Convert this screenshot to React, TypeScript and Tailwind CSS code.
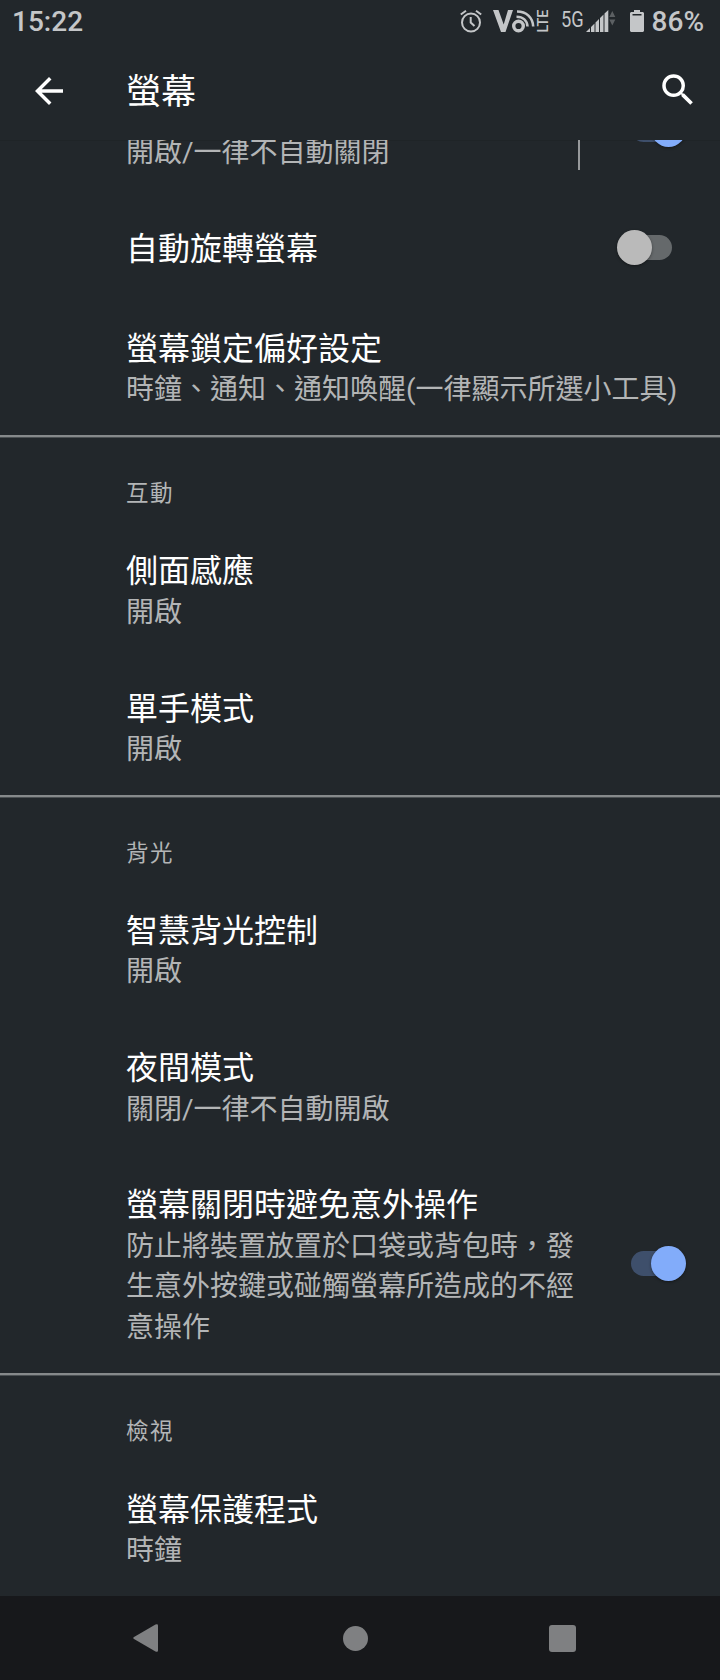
import React from 'react';
import { MdArrowBack, MdSearch } from 'react-icons/md';

interface SwitchProps {
  on: boolean;
}

const Switch: React.FC<SwitchProps> = ({ on }) => (
  <div className="relative flex h-[35px] w-[69px] shrink-0 items-center justify-center">
    <div className={`h-[25px] w-[41px] rounded-full ${on ? 'bg-[#3e4f6b]' : 'bg-[#65696b]'}`} />
    <div
      className={`absolute top-0 size-[35px] rounded-full shadow-[0_1px_3px_rgba(0,0,0,0.4)] ${
        on ? 'right-0 bg-[#82acfa]' : 'left-0 bg-[#bababa]'
      }`}
    />
  </div>
);

interface ItemProps {
  title: string;
  summary?: string;
  on?: boolean;
}

const Item: React.FC<ItemProps> = ({ title, summary, on }) => {
  if (!summary) {
    return (
      <div className="flex h-[100px] items-center justify-between pl-[126px] pr-[34px]">
        <h3 className="pt-[3px] text-[32px] leading-[41px] text-white">{title}</h3>
        {on !== undefined && <Switch on={on} />}
      </div>
    );
  }
  return (
    <div className="flex items-center justify-between pl-[126px] pr-[34px]">
      <div className={`pt-[30px] pb-[24.2px] ${on !== undefined ? 'w-[452px]' : 'whitespace-nowrap'}`}>
        <h3 className="text-[32px] leading-[42.2px] text-white">{title}</h3>
        <p className="text-[28px] leading-[40.7px] text-[#b3b5b6]">{summary}</p>
      </div>
      {on !== undefined && <Switch on={on} />}
    </div>
  );
};

interface SectionProps {
  label: string;
  children: React.ReactNode;
}

const Section: React.FC<SectionProps> = ({ label, children }) => (
  <section className="border-t-2 border-[#86898b] shadow-[inset_0_1px_0_#4b5053]">
    <h2 className="h-[83.6px] pl-[126px] pt-[39.9px] text-[22.5px] leading-[32px] tracking-[1.5px] text-[#b3b5b6]">
      {label}
    </h2>
    {children}
  </section>
);

const StatusBar: React.FC = () => (
  <div className="flex h-[44px] shrink-0 items-center justify-between pl-[12px] pr-[16px] text-[28px] font-medium text-[#c4c6c8]">
    <span>15:22</span>
    <div className="flex items-center">
      {/* alarm */}
      <svg className="mr-[10px] -mt-[3px]" width="24" height="24" viewBox="0 0 24 24" fill="none" stroke="#c4c6c8" strokeWidth="2">
        <circle cx="12" cy="13.5" r="9" />
        <path d="M11.7 8v5.5l3.8 3.5M1.8 5.5L7 1.7M22.2 5.5L17 1.7" />
      </svg>
      {/* VoLTE */}
      <svg className="mr-[12px] -mt-[3px]" width="56" height="26" viewBox="0 0 56 26" fill="none">
        <path d="M0 2h5.5l5.2 14.5L15 2h5l-7.5 22H8z" fill="#c4c6c8" />
        <circle cx="25.5" cy="18" r="4.8" stroke="#c4c6c8" strokeWidth="3.4" />
        <path d="M23.5 8.7c6.5 0 10.7 3.8 11 9.8M24 3.5c9.5 0 15.7 6 16.2 15" stroke="#c4c6c8" strokeWidth="2.6" />
        <text
          transform="translate(54.5 24.5) rotate(-90)"
          textLength="23"
          lengthAdjust="spacingAndGlyphs"
          fontSize="14.5"
          fontWeight="500"
          fill="#c4c6c8"
        >
          LTE
        </text>
      </svg>
      <span className="-mt-[3px] mr-[4px] w-[21px] origin-left scale-x-[0.85] text-[21.5px] font-normal">5G</span>
      <svg className="mr-[14px] -mt-[3px]" width="30" height="24" viewBox="0 0 30 24" fill="#c4c6c8">
        <path d="M0 23l4-4v4zM5 18l3.5-3.5V23H5zM9.5 13.5l3.500-3.500V23H9.500zM14 9l3.5-3.5V23H14zM18.5 4.5L22.3 1v22h-3.8z" />
        <path d="M23.3 8l3-6 3 6zM23.3 10.5l3 6 3-6z" fill="#5c6063" />
      </svg>
      <svg className="mr-[8px] -mt-[3px]" width="14" height="24" viewBox="0 0 14 24" fill="#c4c6c8">
        <path d="M4 1h6v2h3l1 1v18l-1 1H1l-1-1V4l1-1h3z" />
        <path d="M2.5 5h9v1.500h-9z" fill="#22272b" />
      </svg>
      <span>86%</span>
    </div>
  </div>
);

const NavBar: React.FC = () => (
  <nav className="flex h-[84px] shrink-0 items-center justify-between bg-[#17181b] pl-[133px] pr-[144px]">
    <svg width="25" height="28" viewBox="0 0 25 28" fill="#7f8082">
      <path d="M1 13L22.5.5Q25-.5 25 1.5v25Q25 28.5 22.5 27.5L1 15Q-.5 14 1 13z" />
    </svg>
    <div className="ml-[4px] size-[25px] rounded-full bg-[#7f8082]" />
    <div className="size-[27px] rounded-[3px] bg-[#7f8082]" />
  </nav>
);

const App: React.FC = () => {
  return (
    <div
      lang="zh-Hant"
      className="flex h-[1680px] w-[720px] flex-col overflow-hidden bg-[#22272b] font-['Roboto','Noto_Sans_CJK_TC',sans-serif]"
    >
      <StatusBar />
      <header className="flex h-[96px] shrink-0 items-center pl-[28px] pr-[21.5px] text-white">
        <MdArrowBack size={42} className="-mt-[2px]" />
        <h1 className="ml-[56px] flex-1 pt-[2px] text-[35px] leading-[40px]">螢幕</h1>
        <MdSearch size={42} className="-mt-[4px]" />
      </header>

      {/* the list is scrolled, so its first row is cut by the header */}
      <main className="flex min-h-0 flex-1 flex-col overflow-hidden shadow-[inset_0_1px_0_#1f2427]">
        <div className="-mt-[79.5px] flex h-[137.3px] shrink-0 items-center pl-[126px] pr-[34px]">
          <p className="flex-1 pt-[49px] text-[28px] leading-[40.7px] text-[#b3b5b6]">開啟/一律不自動關閉</p>
          <div className="mr-[37px] h-[81px] w-[2px] bg-[#97999b]" />
          <Switch on={true} />
        </div>
        <Item title="自動旋轉螢幕" on={false} />
        <Item title="螢幕鎖定偏好設定" summary="時鐘、通知、通知喚醒(一律顯示所選小工具)" />
        <Section label="互動">
          <Item title="側面感應" summary="開啟" />
          <Item title="單手模式" summary="開啟" />
        </Section>
        <Section label="背光">
          <Item title="智慧背光控制" summary="開啟" />
          <Item title="夜間模式" summary="關閉/一律不自動開啟" />
          <Item
            title="螢幕關閉時避免意外操作"
            summary="防止將裝置放置於口袋或背包時，發生意外按鍵或碰觸螢幕所造成的不經意操作"
            on={true}
          />
        </Section>
        <Section label="檢視">
          <Item title="螢幕保護程式" summary="時鐘" />
        </Section>
      </main>

      <NavBar />
    </div>
  );
};

export default App;
